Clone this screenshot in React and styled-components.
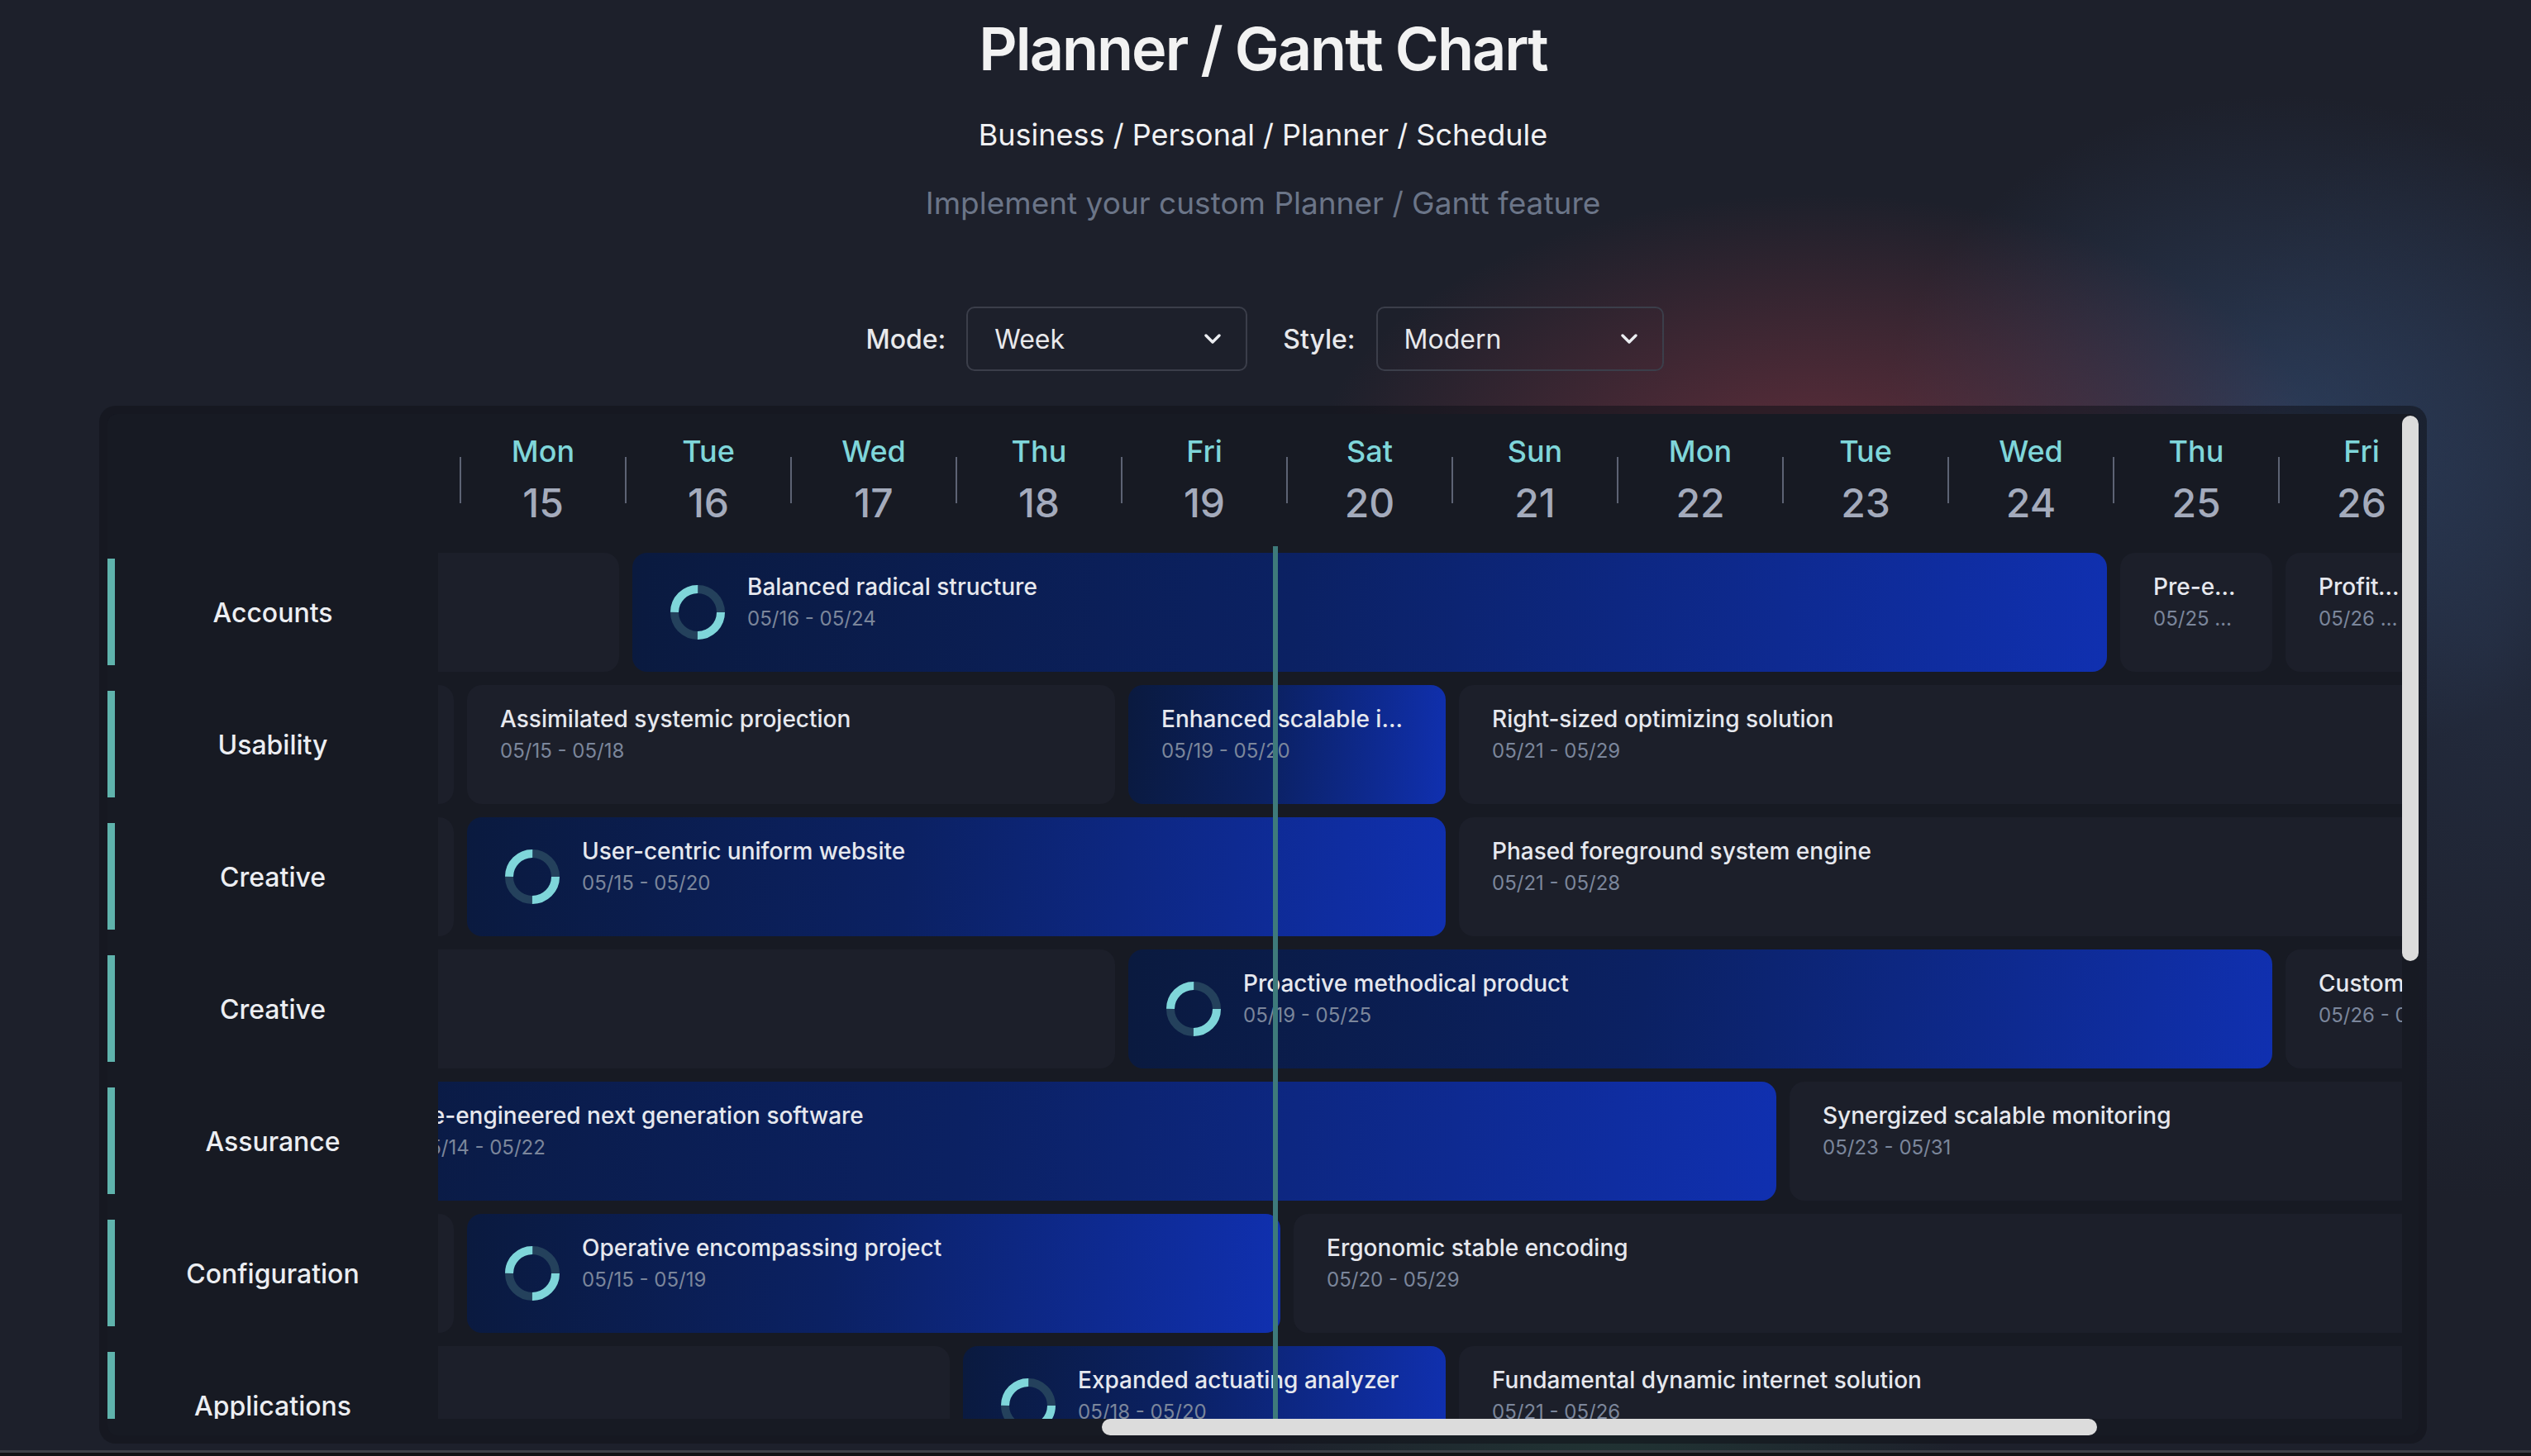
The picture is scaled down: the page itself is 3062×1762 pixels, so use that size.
import React, { useLayoutEffect, useRef } from "react";
import styled, { createGlobalStyle } from "styled-components";

const COL = 200;
const LABEL_W = 400;
const DAYS = 30;
const ROW_H = 160;
const VIEW_W = 2776;
const VIEW_H = 1216;
const BAR_SIZE = 20;
const SCROLL_LEFT = 2773;
const DAY_NAMES = ["Mon", "Tue", "Wed", "Thu", "Fri", "Sat", "Sun"];

const GlobalStyle = createGlobalStyle`
  *, *::before, *::after { box-sizing: border-box; }
  html, body { margin: 0; padding: 0; overflow: hidden; }
  body {
    min-height: 100vh;
    font-family: Inter, "Noto Sans", "Liberation Sans", sans-serif;
    color: #e5e7eb;
    background:
      radial-gradient(820px 460px at 2200px 580px, rgba(145, 56, 70, 0.6), rgba(145, 56, 70, 0) 75%),
      radial-gradient(640px 540px at 2760px 520px, rgba(58, 90, 138, 0.45), rgba(58, 90, 138, 0) 75%),
      radial-gradient(520px 900px at 3010px 780px, rgba(45, 62, 95, 0.35), rgba(45, 62, 95, 0) 75%),
      radial-gradient(600px 260px at 1950px 1790px, rgba(40, 95, 70, 0.35), rgba(40, 95, 70, 0) 72%),
      #1d202b;
  }
`;

const Page = styled.div`
  width: 2816px;
  margin-left: 120px;
  padding-top: 16px;
  display: flex;
  flex-direction: column;
  align-items: center;
`;

const Title = styled.h1`
  margin: 0;
  font-size: 72px;
  line-height: 86px;
  font-weight: 600;
  color: #f2f2f2;
  letter-spacing: -2px;
`;

const Subtitle = styled.div`
  margin-top: 34px;
  font-size: 36px;
  line-height: 54px;
  color: #f1f1f3;
`;

const Tagline = styled.div`
  margin-top: 29px;
  font-size: 37px;
  line-height: 54px;
  color: #6b7588;
`;

const Controls = styled.div`
  margin-top: 98px;
  display: flex;
  align-items: center;
  padding-left: 4px;
`;

const FieldLabel = styled.span`
  font-size: 32px;
  font-weight: 500;
  color: #e8e9ec;
  margin: 0 25px 0 ${(p) => (p.$first ? 0 : 43)}px;
`;

const SelectBox = styled.div`
  width: ${(p) => p.$w}px;
  height: 78px;
  border: 2px solid #3b3e4a;
  border-radius: 10px;
  display: flex;
  align-items: center;
  justify-content: space-between;
  padding: 0 30px 0 32px;
  font-size: 32px;
  color: #e8e9ec;
`;

const Chevron = () => (
  <svg width="20" height="12" viewBox="0 0 20 12">
    <polyline points="2,2 10,10 18,2" fill="none" stroke="#eceef2" strokeWidth="3.4" strokeLinecap="round" strokeLinejoin="round" />
  </svg>
);

const Board = styled.div`
  margin-top: 42px;
  width: 2816px;
  padding: 10px;
  border-radius: 20px;
  background: rgba(16, 18, 25, 0.55);
`;

const Frame = styled.div`
  display: grid;
  grid-template-columns: ${VIEW_W}px ${BAR_SIZE}px;
  grid-template-rows: ${VIEW_H}px ${BAR_SIZE}px;
  background: #171a23;
  border-radius: 12px;
  overflow: hidden;
`;

const Viewport = styled.div`
  overflow: hidden;
`;

const VTrack = styled.div`
  display: flex;
  flex-direction: column;
  padding-top: 2px;
`;

const HTrack = styled.div`
  display: flex;
`;

const Thumb = styled.div`
  flex: none;
  background: #dcdcdc;
  border-radius: 10px;
`;

const Canvas = styled.div`
  position: relative;
  width: ${LABEL_W + DAYS * COL}px;
`;

const HeaderRow = styled.div`
  position: sticky;
  top: 0;
  z-index: 3;
  display: grid;
  grid-template-columns: ${LABEL_W}px repeat(${DAYS}, ${COL}px);
  height: ${ROW_H}px;
  background: #171a23;
`;

const Corner = styled.div`
  position: sticky;
  left: 0;
  z-index: 4;
  background: #171a23;
`;

const DayHead = styled.div`
  position: relative;
  display: flex;
  flex-direction: column;
  align-items: center;
  justify-content: center;
  gap: 12px;
  &::before {
    content: "";
    position: absolute;
    left: -1px;
    top: 50%;
    transform: translateY(-50%);
    width: 2px;
    height: 56px;
    background: #5d6374;
  }
`;

const DayName = styled.span`
  font-size: 36px;
  line-height: 44px;
  font-weight: 500;
  color: #7fd6da;
`;

const DayNum = styled.span`
  font-size: 48px;
  line-height: 58px;
  font-weight: 500;
  color: #a4abbc;
`;

const Row = styled.div`
  display: grid;
  grid-template-columns: ${LABEL_W}px ${DAYS * COL}px;
  height: ${ROW_H}px;
`;

const Label = styled.div`
  position: sticky;
  left: 0;
  z-index: 2;
  background: #171a23;
  display: flex;
  align-items: center;
  justify-content: center;
  font-size: 32px;
  font-weight: 500;
  color: #eceef2;
  &::before {
    content: "";
    position: absolute;
    left: 0;
    top: 15px;
    bottom: 16px;
    width: 9px;
    background: #5fb3ac;
  }
`;

const Track = styled.div`
  display: grid;
  grid-template-columns: repeat(${DAYS}, ${COL}px);
  grid-template-rows: ${ROW_H}px;
`;

const Bar = styled.div`
  grid-row: 1;
  grid-column: ${(p) => p.$s} / ${(p) => p.$e + 1};
  margin: 8px;
  min-width: 0;
  overflow: hidden;
  border-radius: 18px;
  display: flex;
  align-items: flex-start;
  padding: 20px 40px;
  background: ${(p) =>
    p.$accent
      ? "linear-gradient(95deg, #0a1a3f 0%, #0b2163 45%, #1030b0 100%)"
      : "#1c1f2a"};
`;

const RingWrap = styled.div`
  flex: none;
  align-self: center;
  display: flex;
  margin: 0 27px 0 6px;
`;

const BarText = styled.div`
  min-width: 0;
  display: flex;
  flex-direction: column;
`;

const BarTitle = styled.span`
  font-size: 28px;
  line-height: 42px;
  font-weight: 500;
  color: #e6e8ee;
  white-space: nowrap;
  overflow: hidden;
  text-overflow: ellipsis;
`;

const BarDate = styled.span`
  font-size: 24px;
  line-height: 36px;
  color: #7b869b;
  white-space: nowrap;
  overflow: hidden;
  text-overflow: ellipsis;
`;

const NowLine = styled.div`
  position: absolute;
  top: ${ROW_H}px;
  bottom: 0;
  width: 6px;
  z-index: 1;
  background: #3e7a7b;
`;

const Footer = styled.div`
  margin-top: 8px;
  height: 20px;
  border-top: 3px solid #3c3f47;
  background: #111216;
`;

const Ring = () => (
  <svg width="66" height="66" viewBox="0 0 66 66">
    <circle cx="33" cy="33" r="28" fill="none" stroke="#24415c" strokeWidth="10" />
    <circle cx="33" cy="33" r="28" fill="none" stroke="#7fd6da" strokeWidth="10" strokeDasharray="43.98 43.98" />
  </svg>
);

const t = (title, s, e, accent = false, ring = false) => ({ title, s, e, accent, ring });

const ROWS = [
  { label: "Accounts", tasks: [
    t("Extended zero tolerance policy", 10, 15),
    t("Balanced radical structure", 16, 24, true, true),
    t("Pre-emptive didactic toolset", 25, 25),
    t("Profit-focused mobile alliance", 26, 26),
    t("Robust asynchronous portal", 27, 30),
  ] },
  { label: "Usability", tasks: [
    t("Multi-layered content-based hub", 9, 14),
    t("Assimilated systemic projection", 15, 18),
    t("Enhanced scalable intranet", 19, 20, true),
    t("Right-sized optimizing solution", 21, 29),
  ] },
  { label: "Creative", tasks: [
    t("Focused logistical paradigm", 8, 14),
    t("User-centric uniform website", 15, 20, true, true),
    t("Phased foreground system engine", 21, 28),
  ] },
  { label: "Creative", tasks: [
    t("Vision-oriented bifurcated array", 9, 18),
    t("Proactive methodical product", 19, 25, true, true),
    t("Customizable neutral throughput", 26, 30),
  ] },
  { label: "Assurance", tasks: [
    t("Re-engineered next generation software", 14, 22, true, true),
    t("Synergized scalable monitoring", 23, 31),
  ] },
  { label: "Configuration", tasks: [
    t("Face to face radical frame", 8, 14),
    t("Operative encompassing project", 15, 19, true, true),
    t("Ergonomic stable encoding", 20, 29),
  ] },
  { label: "Applications", tasks: [
    t("Team-oriented tertiary groupware", 10, 17),
    t("Expanded actuating analyzer", 18, 20, true, true),
    t("Fundamental dynamic internet solution", 21, 26),
  ] },
  { label: "Metrics", tasks: [
    t("Organized didactic moratorium", 12, 19, true, true),
    t("Devolved client-server matrix", 20, 27),
  ] },
  { label: "Markets", tasks: [
    t("Innovative global interface", 11, 16),
    t("Seamless real-time archive", 17, 24, true, true),
  ] },
  { label: "Research", tasks: [
    t("Ameliorated bandwidth-monitored core", 13, 21),
    t("Streamlined holistic initiative", 22, 28, true, true),
  ] },
  { label: "Quality", tasks: [
    t("Cloned attitude-oriented strategy", 10, 18, true, true),
    t("Sharable human-resource website", 19, 26),
  ] },
  { label: "Integration", tasks: [
    t("Managed dedicated framework", 14, 20),
    t("Digitized modular knowledgebase", 21, 29, true, true),
  ] },
  { label: "Security", tasks: [
    t("Persistent encompassing firmware", 12, 17, true, true),
    t("Universal fault-tolerant flexibility", 18, 25),
  ] },
];

const pad = (n) => String(n).padStart(2, "0");
const fmt = (d) => `05/${pad(d)}`;
const days = Array.from({ length: DAYS }, (_, i) => i + 1);

const contentW = LABEL_W + DAYS * COL;
const contentH = ROW_H * (ROWS.length + 1);
const hThumbW = Math.round((VIEW_W * VIEW_W) / contentW);
const hThumbX = Math.round((SCROLL_LEFT / (contentW - VIEW_W)) * (VIEW_W - hThumbW));
const vThumbH = Math.round((VIEW_H * VIEW_H) / contentH);

export default function App() {
  const ref = useRef(null);
  useLayoutEffect(() => {
    if (ref.current) {
      ref.current.scrollLeft = SCROLL_LEFT;
      ref.current.scrollTop = 0;
    }
  }, []);

  return (
    <>
      <GlobalStyle />
      <Page>
        <Title>Planner / Gantt Chart</Title>
        <Subtitle>Business / Personal / Planner / Schedule</Subtitle>
        <Tagline>Implement your custom Planner / Gantt feature</Tagline>
        <Controls>
          <FieldLabel $first>Mode:</FieldLabel>
          <SelectBox $w={340}>
            <span>Week</span>
            <Chevron />
          </SelectBox>
          <FieldLabel>Style:</FieldLabel>
          <SelectBox $w={348}>
            <span>Modern</span>
            <Chevron />
          </SelectBox>
        </Controls>
        <Board>
          <Frame>
            <Viewport ref={ref}>
              <Canvas>
                <HeaderRow>
                  <Corner />
                  {days.map((d) => (
                    <DayHead key={d}>
                      <DayName>{DAY_NAMES[(d - 1) % 7]}</DayName>
                      <DayNum>{d}</DayNum>
                    </DayHead>
                  ))}
                </HeaderRow>
                {ROWS.map((row, ri) => (
                  <Row key={ri}>
                    <Label>{row.label}</Label>
                    <Track>
                      {row.tasks.map((task, ti) => (
                        <Bar key={ti} $s={task.s} $e={Math.min(task.e, DAYS)} $accent={task.accent}>
                          {task.ring && (
                            <RingWrap>
                              <Ring />
                            </RingWrap>
                          )}
                          <BarText>
                            <BarTitle>{task.title}</BarTitle>
                            <BarDate>{`${fmt(task.s)} - ${fmt(task.e)}`}</BarDate>
                          </BarText>
                        </Bar>
                      ))}
                    </Track>
                  </Row>
                ))}
                <NowLine style={{ left: LABEL_W + 18 * COL + 183 }} />
              </Canvas>
            </Viewport>
            <VTrack>
              <Thumb style={{ height: vThumbH }} />
            </VTrack>
            <HTrack>
              <Thumb style={{ width: hThumbW, marginLeft: hThumbX }} />
            </HTrack>
          </Frame>
        </Board>
      </Page>
      <Footer />
    </>
  );
}
